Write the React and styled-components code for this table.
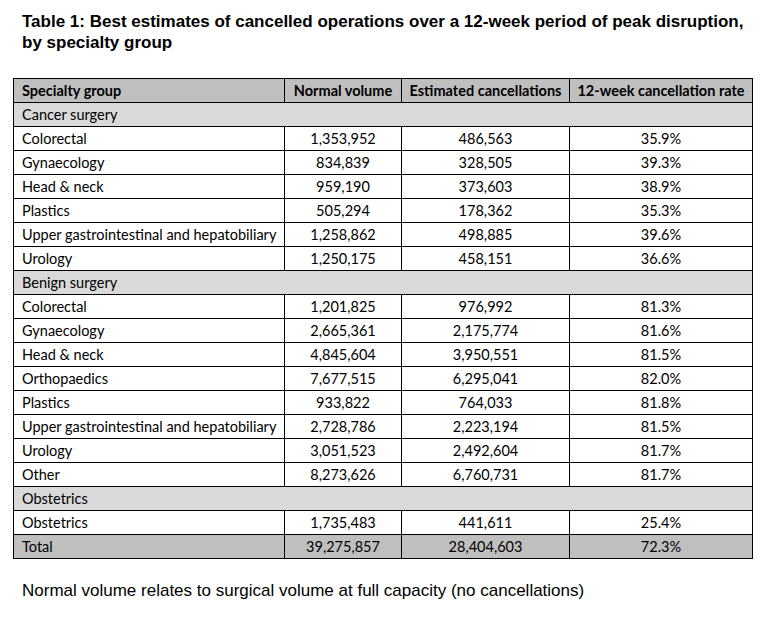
import styled, { createGlobalStyle } from "styled-components";

const GlobalStyle = createGlobalStyle`
    body {
        margin: 0;
        background: #ffffff;
        color: #000000;
    }
`;

const Page = styled.div`
    width: 766px;
    height: 619px;
    padding: 11px 0 0 13px;
    box-sizing: border-box;
    background: #ffffff;
`;

const Title = styled.h1`
    margin: 0 0 25px 9px;
    font-family: "Liberation Sans", Arial, sans-serif;
    font-weight: 700;
    font-size: 17px;
    line-height: 21px;
    color: #000000;
`;

const Table = styled.table`
    border-collapse: collapse;
    table-layout: fixed;
    width: 739px;
    font-family: Lato, "Open Sans", sans-serif;
    font-size: 14.5px;
    color: #000000;
`;

const Col = styled.col`
    width: ${({ w }) => w}px;
`;

const Row = styled.tr`
    height: 24px;
    background: ${({ tone }) =>
        tone === "head" || tone === "total"
            ? "#bfbfbf"
            : tone === "section"
            ? "#d9d9d9"
            : "#ffffff"};
`;

const Cell = styled.td`
    border: 1px solid #000000;
    padding: ${({ center }) => (center ? "0" : "0 0 0 8px")};
    height: 23px;
    line-height: 22px;
    white-space: nowrap;
    text-align: ${({ center }) => (center ? "center" : "left")};
    font-weight: ${({ bold }) => (bold ? 700 : 400)};
`;

const Note = styled.p`
    margin: 22px 0 0 9px;
    font-family: "Liberation Sans", Arial, sans-serif;
    font-size: 17px;
    line-height: 20px;
    color: #000000;
`;

const sections = [
    {
        name: "Cancer surgery",
        rows: [
            ["Colorectal", "1,353,952", "486,563", "35.9%"],
            ["Gynaecology", "834,839", "328,505", "39.3%"],
            ["Head & neck", "959,190", "373,603", "38.9%"],
            ["Plastics", "505,294", "178,362", "35.3%"],
            ["Upper gastrointestinal and hepatobiliary", "1,258,862", "498,885", "39.6%"],
            ["Urology", "1,250,175", "458,151", "36.6%"],
        ],
    },
    {
        name: "Benign surgery",
        rows: [
            ["Colorectal", "1,201,825", "976,992", "81.3%"],
            ["Gynaecology", "2,665,361", "2,175,774", "81.6%"],
            ["Head & neck", "4,845,604", "3,950,551", "81.5%"],
            ["Orthopaedics", "7,677,515", "6,295,041", "82.0%"],
            ["Plastics", "933,822", "764,033", "81.8%"],
            ["Upper gastrointestinal and hepatobiliary", "2,728,786", "2,223,194", "81.5%"],
            ["Urology", "3,051,523", "2,492,604", "81.7%"],
            ["Other", "8,273,626", "6,760,731", "81.7%"],
        ],
    },
    {
        name: "Obstetrics",
        rows: [["Obstetrics", "1,735,483", "441,611", "25.4%"]],
    },
];

function DataRow({ cells, tone }) {
    return (
        <Row tone={tone}>
            {cells.map((c, i) => (
                <Cell key={i} center={i > 0}>
                    {c}
                </Cell>
            ))}
        </Row>
    );
}

export default function App() {
    return (
        <Page>
            <GlobalStyle />
            <Title>
                Table 1: Best estimates of cancelled operations over a 12-week
                period of peak disruption,
                <br />
                by specialty group
            </Title>
            <Table>
                <colgroup>
                    <Col w={271} />
                    <Col w={117} />
                    <Col w={168} />
                    <Col w={183} />
                </colgroup>
                <tbody>
                    <Row tone="head">
                        <Cell bold>Specialty group</Cell>
                        <Cell bold center>Normal volume</Cell>
                        <Cell bold center>Estimated cancellations</Cell>
                        <Cell bold center>12-week cancellation rate</Cell>
                    </Row>
                    {sections.map((s) => [
                        <Row tone="section" key={s.name}>
                            <Cell colSpan={4}>{s.name}</Cell>
                        </Row>,
                        ...s.rows.map((r, i) => (
                            <DataRow key={s.name + i} cells={r} />
                        )),
                    ])}
                    <DataRow
                        tone="total"
                        cells={["Total", "39,275,857", "28,404,603", "72.3%"]}
                    />
                </tbody>
            </Table>
            <Note>
                Normal volume relates to surgical volume at full capacity (no
                cancellations)
            </Note>
        </Page>
    );
}
